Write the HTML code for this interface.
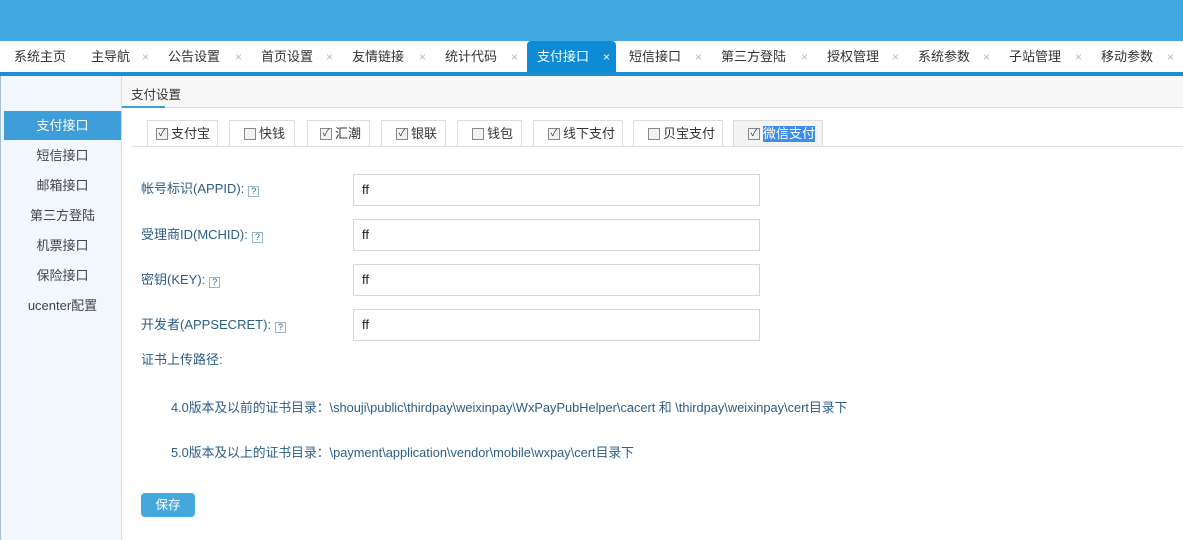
<!DOCTYPE html>
<html><head><meta charset="utf-8"><style>
*{margin:0;padding:0;box-sizing:border-box}
body{width:1183px;height:540px;overflow:hidden;background:#fff;font-family:"Liberation Sans","Noto Sans CJK SC",sans-serif;font-size:13px;color:#333;position:relative}
.a{position:absolute}
#top{left:0;top:0;width:1183px;height:41px;background:#42a8e0}
.tab{position:absolute;top:41px;height:31px;background:#fff;border-radius:4px 4px 0 0;line-height:31px;padding-left:10px;font-size:13px;color:#333}
.tab .x{position:absolute;right:6px;top:1px;line-height:31px;color:#bbb;font-size:12px}
.tab.on{background:#0f8ad5;color:#fff}
.tab.on .x{color:#fff}
#bl{left:0;top:72px;width:1183px;height:4px;background:#1a8fd6}
#side{left:0;top:76px;width:122px;height:464px;background:#f1f7fd;border-left:1px solid #9fbfdc;border-right:1px solid #cfdfee}
.si{position:absolute;left:3px;width:117px;height:29px;line-height:29px;text-align:center;color:#444;font-size:13px}
.si.on{background:#3e9ed9;color:#fff}
#sub{left:122px;top:76px;width:1061px;height:32px;background:#f7f7f7;border-bottom:1px solid #ddd}
.cb{position:absolute;top:120px;height:26px;border:1px solid #ddd;border-bottom:none;background:#fff;line-height:26px;font-size:13px;color:#333;display:flex;align-items:center}
.box{display:inline-block;width:12px;height:12px;border:1px solid #888;background:#f3f3f3;margin-right:3px;font-size:10px;line-height:10px;text-align:center;color:#336;flex:none}
.lab{position:absolute;left:141px;color:#2b5d86;font-size:13px;line-height:16px}
.q{display:inline-block;width:11px;height:11px;border:1px solid #9bb;font-size:9px;line-height:9px;text-align:center;color:#2b5d86;margin-left:4px;vertical-align:-1px}
.inp{position:absolute;left:353px;width:407px;height:32px;border:1px solid #d6d6d6;padding-left:8px;line-height:30px;font-size:13px;color:#222}
.t{position:absolute;color:#2b5d86;font-size:12.8px;white-space:nowrap}
</style></head><body>
<div class="a" id="top"></div>
<div class="tab" style="left:4px;width:73px">系统主页</div>
<div class="tab" style="left:80px;width:75px;padding-left:11px">主导航<span class="x">×</span></div>
<div class="tab" style="left:158px;width:90px">公告设置<span class="x">×</span></div>
<div class="tab" style="left:251px;width:88px">首页设置<span class="x">×</span></div>
<div class="tab" style="left:342px;width:90px">友情链接<span class="x">×</span></div>
<div class="tab" style="left:435px;width:89px">统计代码<span class="x">×</span></div>
<div class="tab on" style="left:527px;width:89px">支付接口<span class="x">×</span></div>
<div class="tab" style="left:619px;width:89px">短信接口<span class="x">×</span></div>
<div class="tab" style="left:711px;width:103px">第三方登陆<span class="x">×</span></div>
<div class="tab" style="left:817px;width:88px">授权管理<span class="x">×</span></div>
<div class="tab" style="left:908px;width:88px">系统参数<span class="x">×</span></div>
<div class="tab" style="left:999px;width:89px">子站管理<span class="x">×</span></div>
<div class="tab" style="left:1091px;width:89px">移动参数<span class="x">×</span></div>
<div class="a" id="bl"></div>
<div class="a" id="side">
<div class="si on" style="top:35px">支付接口</div>
<div class="si" style="top:65px">短信接口</div>
<div class="si" style="top:95px">邮箱接口</div>
<div class="si" style="top:125px">第三方登陆</div>
<div class="si" style="top:155px">机票接口</div>
<div class="si" style="top:185px">保险接口</div>
<div class="si" style="top:215px">ucenter配置</div>
</div>
<div class="a" id="sub"></div>
<div class="a" style="left:131px;top:84px;font-size:12.5px;color:#333">支付设置</div>
<div class="a" style="left:122px;top:106px;width:43px;height:2px;background:#3e9ed9"></div>
<div class="a" style="left:131px;top:146px;width:1052px;height:1px;background:#ddd"></div>
<div class="cb" style="left:147px;width:71px;padding-left:8px"><span class="box">✓</span>支付宝</div>
<div class="cb" style="left:229px;width:66px;padding-left:14px"><span class="box"></span>快钱</div>
<div class="cb" style="left:307px;width:63px;padding-left:12px"><span class="box">✓</span>汇潮</div>
<div class="cb" style="left:381px;width:65px;padding-left:14px"><span class="box">✓</span>银联</div>
<div class="cb" style="left:457px;width:65px;padding-left:14px"><span class="box"></span>钱包</div>
<div class="cb" style="left:533px;width:90px;padding-left:14px"><span class="box">✓</span>线下支付</div>
<div class="cb" style="left:633px;width:90px;padding-left:14px"><span class="box"></span>贝宝支付</div>
<div class="cb" style="left:733px;width:90px;padding-left:14px;background:#f3f3f3"><span class="box">✓</span><span style="background:#3d8ee8;color:#fff;display:inline-block;line-height:16px">微信支付</span></div>
<div class="lab" style="top:181px">帐号标识(APPID):<span class="q">?</span></div>
<div class="lab" style="top:227px">受理商ID(MCHID):<span class="q">?</span></div>
<div class="lab" style="top:272px">密钥(KEY):<span class="q">?</span></div>
<div class="lab" style="top:317px">开发者(APPSECRET):<span class="q">?</span></div>
<div class="inp" style="top:174px">ff</div>
<div class="inp" style="top:219px">ff</div>
<div class="inp" style="top:264px">ff</div>
<div class="inp" style="top:309px">ff</div>
<div class="lab" style="top:352px">证书上传路径:</div>
<div class="t" style="left:171px;top:397px">4.0版本及以前的证书目录：\shouji\public\thirdpay\weixinpay\WxPayPubHelper\cacert 和 \thirdpay\weixinpay\cert目录下</div>
<div class="t" style="left:171px;top:442px">5.0版本及以上的证书目录：\payment\application\vendor\mobile\wxpay\cert目录下</div>
<div class="a" style="left:141px;top:493px;width:54px;height:24px;background:#44a8dd;border-radius:4px;color:#fff;text-align:center;line-height:24px;font-size:12.5px">保存</div>
</body></html>
